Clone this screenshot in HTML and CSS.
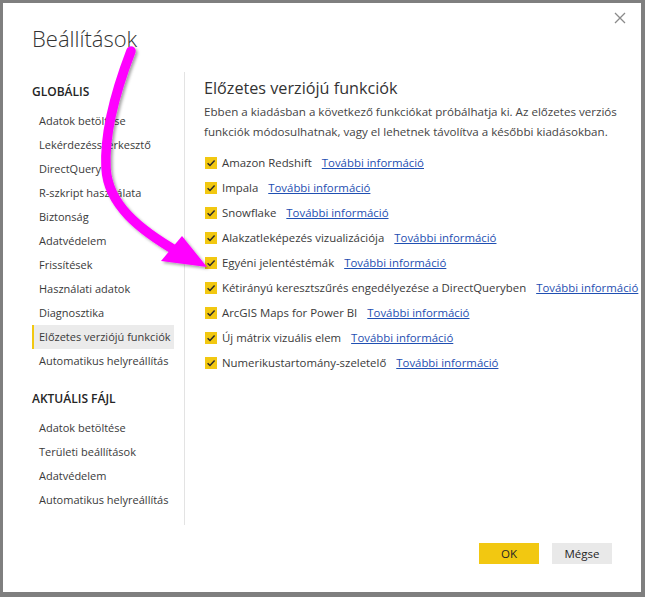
FILE: index.html
```html
<!DOCTYPE html>
<html lang="hu">
<head>
<meta charset="utf-8">
<title>Beállítások</title>
<link rel="stylesheet" href="styles.css">
</head>
<body>
<div class="dialog">
  <button class="close" aria-label="Bezárás">
    <svg width="12" height="12" viewBox="0 0 12 12"><path d="M1 1L11 11M11 1L1 11" stroke="#8a8a8a" stroke-width="1.3" fill="none"/></svg>
  </button>
  <h1 class="title">Beállítások</h1>
  <div class="main">
    <nav class="nav">
      <div class="nav-head">GLOBÁLIS</div>
      <ul class="nav-list">
        <li>Adatok betöltése</li>
        <li>Lekérdezésszerkesztő</li>
        <li>DirectQuery</li>
        <li>R-szkript használata</li>
        <li>Biztonság</li>
        <li>Adatvédelem</li>
        <li>Frissítések</li>
        <li>Használati adatok</li>
        <li>Diagnosztika</li>
        <li class="active">Előzetes verziójú funkciók</li>
        <li>Automatikus helyreállítás</li>
      </ul>
      <div class="nav-head second">AKTUÁLIS FÁJL</div>
      <ul class="nav-list">
        <li>Adatok betöltése</li>
        <li>Területi beállítások</li>
        <li>Adatvédelem</li>
        <li>Automatikus helyreállítás</li>
      </ul>
    </nav>
    <section class="content">
      <h2 class="heading">Előzetes verziójú funkciók</h2>
      <p class="desc">Ebben a kiadásban a következő funkciókat próbálhatja ki. Az előzetes verziós funkciók módosulhatnak, vagy el lehetnek távolítva a későbbi kiadásokban.</p>
      <ul class="options">
        <li><span class="cb"><svg viewBox="0 0 12 12"><path d="M2.6 6.2L5 8.5L9.6 3.6" stroke="#2b2b2b" stroke-width="1.5" fill="none"/></svg></span><span class="label">Amazon Redshift</span><a href="#">További információ</a></li>
        <li><span class="cb"><svg viewBox="0 0 12 12"><path d="M2.6 6.2L5 8.5L9.6 3.6" stroke="#2b2b2b" stroke-width="1.5" fill="none"/></svg></span><span class="label">Impala</span><a href="#">További információ</a></li>
        <li><span class="cb"><svg viewBox="0 0 12 12"><path d="M2.6 6.2L5 8.5L9.6 3.6" stroke="#2b2b2b" stroke-width="1.5" fill="none"/></svg></span><span class="label">Snowflake</span><a href="#">További információ</a></li>
        <li><span class="cb"><svg viewBox="0 0 12 12"><path d="M2.6 6.2L5 8.5L9.6 3.6" stroke="#2b2b2b" stroke-width="1.5" fill="none"/></svg></span><span class="label">Alakzatleképezés vizualizációja</span><a href="#">További információ</a></li>
        <li><span class="cb"><svg viewBox="0 0 12 12"><path d="M2.6 6.2L5 8.5L9.6 3.6" stroke="#2b2b2b" stroke-width="1.5" fill="none"/></svg></span><span class="label">Egyéni jelentéstémák</span><a href="#">További információ</a></li>
        <li><span class="cb"><svg viewBox="0 0 12 12"><path d="M2.6 6.2L5 8.5L9.6 3.6" stroke="#2b2b2b" stroke-width="1.5" fill="none"/></svg></span><span class="label">Kétirányú keresztszűrés engedélyezése a DirectQueryben</span><a href="#">További információ</a></li>
        <li><span class="cb"><svg viewBox="0 0 12 12"><path d="M2.6 6.2L5 8.5L9.6 3.6" stroke="#2b2b2b" stroke-width="1.5" fill="none"/></svg></span><span class="label">ArcGIS Maps for Power BI</span><a href="#">További információ</a></li>
        <li><span class="cb"><svg viewBox="0 0 12 12"><path d="M2.6 6.2L5 8.5L9.6 3.6" stroke="#2b2b2b" stroke-width="1.5" fill="none"/></svg></span><span class="label">Új mátrix vizuális elem</span><a href="#">További információ</a></li>
        <li><span class="cb"><svg viewBox="0 0 12 12"><path d="M2.6 6.2L5 8.5L9.6 3.6" stroke="#2b2b2b" stroke-width="1.5" fill="none"/></svg></span><span class="label">Numerikustartomány-szeletelő</span><a href="#">További információ</a></li>
      </ul>
    </section>
  </div>
  <div class="footer">
    <button class="btn primary">OK</button>
    <button class="btn">Mégse</button>
  </div>
  <svg class="arrow" width="645" height="597" viewBox="0 0 645 597">
    <defs>
      <filter id="sh" x="-20%" y="-20%" width="140%" height="140%">
        <feDropShadow dx="2" dy="2" stdDeviation="1.5" flood-color="#000" flood-opacity="0.35"/>
      </filter>
    </defs>
    <g filter="url(#sh)">
      <path d="M131 51 C 118 85, 104 130, 106 168 C 108 205, 140 230, 178 252" stroke="#ff00ff" stroke-width="9.5" stroke-linecap="round" fill="none"/>
      <polygon points="207,267 161,261 182,236" fill="#ff00ff"/>
    </g>
  </svg>
</div>
</body>
</html>
```
FILE: styles.css
```css
* { box-sizing: border-box; }
html, body { margin: 0; padding: 0; }
body {
  width: 645px;
  height: 597px;
  background: #7f7f7f;
  padding: 3px 4px 5px 3px;
  font-family: "Open Sans", "Noto Sans", sans-serif;
  color: #333;
}
.dialog {
  position: relative;
  width: 638px;
  height: 589px;
  background: #fff;
  padding: 19px 29px 0 29px;
  display: flex;
  flex-direction: column;
}
.close {
  position: absolute;
  top: 7px;
  right: 13px;
  width: 16px;
  height: 16px;
  padding: 2px;
  border: 0;
  background: none;
}
.close svg { display: block; }
.title {
  margin: 0;
  font-size: 22px;
  line-height: 32px;
  font-weight: 300;
  color: #333;
}
.main {
  margin-top: 18px;
  margin-right: -20px;
  display: flex;
  height: 453px;
}
.nav {
  width: 152px;
  padding-top: 8px;
  flex: none;
}
.nav-head {
  font-size: 12px;
  font-weight: 600;
  line-height: 24px;
  color: #252525;
  margin-bottom: 5px;
}
.nav-head.second { margin-top: 14px; }
.nav-list { list-style: none; margin: 0; padding: 0; }
.nav-list li {
  font-size: 11px;
  line-height: 24px;
  height: 24px;
  padding-left: 7px;
  color: #3a3a3a;
  width: 142px;
  white-space: nowrap;
}
.nav-list li.active {
  background: #ebebeb;
  border-left: 2px solid #f2c811;
  padding-left: 5px;
}
.content {
  flex: 1;
  min-width: 0;
  border-left: 1px solid #e3e3e3;
  padding-left: 19px;
}
.heading {
  margin: 4px 0 0 0;
  font-size: 16.2px;
  line-height: 24px;
  font-weight: 400;
  color: #333;
}
.desc {
  margin: 2px 0 0 0;
  font-size: 11.6px;
  line-height: 20px;
  color: #444;
}
.options { list-style: none; margin: 8px 0 0 1px; padding: 0; }
.options li {
  height: 25px;
  display: flex;
  align-items: center;
  font-size: 11.4px;
  color: #3a3a3a;
  white-space: nowrap;
}
.cb {
  width: 12px;
  height: 12px;
  background: #f2c811;
  flex: none;
  margin-right: 5px;
}
.cb svg { display: block; width: 12px; height: 12px; }
.label { margin-right: 10px; }
.options a { color: #1f4fb2; text-decoration: underline; }
.footer {
  margin-top: 18px;
  display: flex;
  justify-content: flex-end;
  gap: 13px;
}
.btn {
  width: 60px;
  height: 21px;
  border: 0;
  padding: 0;
  background: #e9e9e9;
  font-family: inherit;
  font-size: 11.5px;
  color: #252525;
}
.btn.primary { background: #f2c811; }
.arrow {
  position: absolute;
  left: -3px;
  top: -3px;
  pointer-events: none;
}
```
